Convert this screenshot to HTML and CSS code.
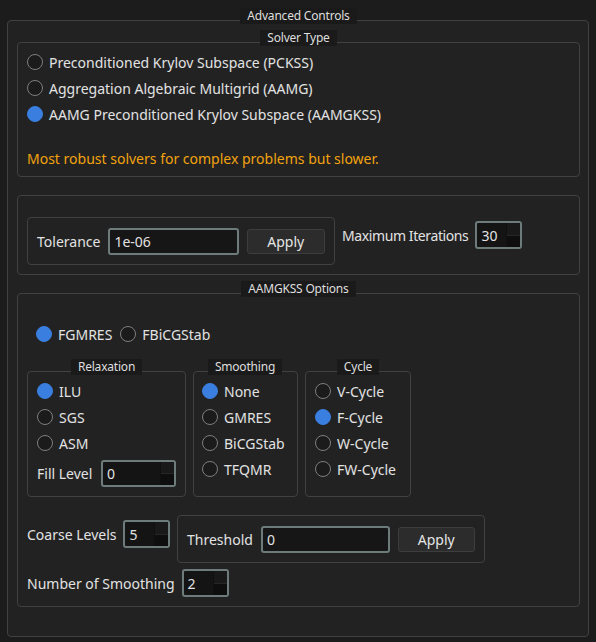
FILE: index.html
```html
<!DOCTYPE html>
<html lang="en">
<head>
    <meta charset="UTF-8">
    <title>Advanced Controls</title>
    <link rel="stylesheet" href="styles.css">
</head>
<body>
    <div class="group outer">
        <div class="group-title">Advanced Controls</div>

        <!-- Solver type selection -->
        <div class="group solver">
            <div class="group-title">Solver Type</div>
            <div class="radio-list">
                <label class="radio"><span class="dot"></span>Preconditioned Krylov Subspace (PCKSS)</label>
                <label class="radio"><span class="dot"></span>Aggregation Algebraic Multigrid (AAMG)</label>
                <label class="radio"><span class="dot on"></span>AAMG Preconditioned Krylov Subspace (AAMGKSS)</label>
            </div>
            <p class="note">Most robust solvers for complex problems but slower.</p>
        </div>

        <!-- Convergence settings -->
        <div class="group params">
            <div class="group inset">
                <span class="label">Tolerance</span>
                <div class="line-edit">1e-06</div>
                <button class="btn">Apply</button>
            </div>
            <div class="field max-iter">
                <span class="label">Maximum Iterations</span>
                <div class="spin"><span class="spin-val">30</span><span class="spin-btns"><i></i><i></i></span></div>
            </div>
        </div>

        <!-- AAMGKSS specific options -->
        <div class="group options">
            <div class="group-title">AAMGKSS Options</div>
            <div class="krylov-row">
                <label class="radio"><span class="dot on"></span>FGMRES</label>
                <label class="radio"><span class="dot"></span>FBiCGStab</label>
            </div>

            <div class="sub-groups">
                <div class="group sub relaxation">
                    <div class="group-title">Relaxation</div>
                    <div class="radio-list">
                        <label class="radio"><span class="dot on"></span>ILU</label>
                        <label class="radio"><span class="dot"></span>SGS</label>
                        <label class="radio"><span class="dot"></span>ASM</label>
                    </div>
                    <div class="field fill-level">
                        <span class="label">Fill Level</span>
                        <div class="spin wide"><span class="spin-val">0</span><span class="spin-btns"><i></i><i></i></span></div>
                    </div>
                </div>
                <div class="group sub smoothing">
                    <div class="group-title">Smoothing</div>
                    <div class="radio-list">
                        <label class="radio"><span class="dot on"></span>None</label>
                        <label class="radio"><span class="dot"></span>GMRES</label>
                        <label class="radio"><span class="dot"></span>BiCGStab</label>
                        <label class="radio"><span class="dot"></span>TFQMR</label>
                    </div>
                </div>
                <div class="group sub cycle">
                    <div class="group-title">Cycle</div>
                    <div class="radio-list">
                        <label class="radio"><span class="dot"></span>V-Cycle</label>
                        <label class="radio"><span class="dot on"></span>F-Cycle</label>
                        <label class="radio"><span class="dot"></span>W-Cycle</label>
                        <label class="radio"><span class="dot"></span>FW-Cycle</label>
                    </div>
                </div>
            </div>

            <div class="levels-row">
                <div class="field coarse">
                    <span class="label">Coarse Levels</span>
                    <div class="spin"><span class="spin-val">5</span><span class="spin-btns"><i></i><i></i></span></div>
                </div>
                <div class="group inset">
                    <span class="label">Threshold</span>
                    <div class="line-edit">0</div>
                    <button class="btn">Apply</button>
                </div>
            </div>
            <div class="field smooth-count">
                <span class="label">Number of Smoothing</span>
                <div class="spin"><span class="spin-val">2</span><span class="spin-btns"><i></i><i></i></span></div>
            </div>
        </div>
    </div>
</body>
</html>
```

FILE: styles.css
```css
/* Page */
body {
    margin: 0;
    padding: 20px 7px 0;
    background: #1c1c1c;
    font-family: "Noto Sans", sans-serif;
    font-size: 14px;
    color: #e2e2e2;
}

/* Group boxes */
.group {
    border: 1px solid #414141;
    border-radius: 4px;
    box-sizing: border-box;
}

.group-title {
    width: fit-content;
    margin: -13px auto 0;
    height: 16px;
    line-height: 16px;
    padding: 0 7px;
    background: #1a1a1a;
    font-size: 12px;
    letter-spacing: -0.2px;
    color: #dedede;
}

.outer {
    background: #222222;
    padding: 0 8px 29px 9px;
    display: flex;
    flex-direction: column;
    gap: 18px;
}

/* Radio buttons */
.radio-list {
    margin-top: 3px;
}

.radio {
    display: flex;
    align-items: center;
    gap: 6px;
    height: 26px;
    white-space: nowrap;
}

.dot {
    width: 16px;
    height: 16px;
    flex: none;
    border-radius: 50%;
    border: 1px solid #7e7e7e;
    background: #1b1b1b;
    box-sizing: border-box;
}

.dot.on {
    background: #3a7fe0;
    border-color: #3a7fe0;
}

/* Solver type */
.solver {
    padding: 0 9px 7px;
}

.note {
    margin: 22px 0 0;
    line-height: 20px;
    color: #f2a30f;
}

/* Tolerance and iterations */
.params {
    display: flex;
    align-items: flex-start;
    gap: 7px;
    padding: 21px 9px 9px;
}

.inset {
    width: 308px;
    height: 48px;
    padding: 0 9px;
    display: flex;
    align-items: center;
    gap: 8px;
}

.label {
    white-space: nowrap;
}

.inset .label,
.fill-level .label,
.coarse .label,
.smooth-count .label {
    flex: 1;
}

.line-edit {
    width: 131px;
    height: 27px;
    box-sizing: border-box;
    border: 2px solid #6d7c7b;
    border-radius: 3px;
    background: #161616;
    padding-left: 4px;
    line-height: 23px;
}

.btn {
    width: 79px;
    height: 25px;
    border: 1px solid #3d3d3d;
    border-radius: 3px;
    background: #2c2c2c;
    color: #e6e6e6;
    font-family: inherit;
    font-size: 14px;
    padding: 0;
}

.field {
    display: flex;
    align-items: center;
    gap: 7px;
}

.max-iter {
    margin-top: 4px;
}

.max-iter .label {
    letter-spacing: -0.4px;
}

/* Spin boxes */
.spin {
    width: 47px;
    height: 28px;
    flex: none;
    display: flex;
    box-sizing: border-box;
    border: 2px solid #6d7c7b;
    border-radius: 3px;
    background: #141414;
}

.spin.wide {
    width: 75px;
    height: 27px;
}

.spin-val {
    flex: 1;
    padding-left: 4px;
    display: flex;
    align-items: center;
}

.spin-btns {
    width: 13px;
    display: flex;
    flex-direction: column;
    border-left: 1px solid #101010;
}

.spin-btns i {
    flex: 1;
    background: #191919;
}

.spin-btns i + i {
    border-top: 1px solid #262626;
    background: #0e0e0e;
}

/* AAMGKSS options */
.options {
    padding: 0 9px 9px;
}

.krylov-row {
    display: flex;
    gap: 8px;
    margin: 24px 0 0 9px;
}

.sub-groups {
    display: flex;
    gap: 7px;
    margin-top: 24px;
}

.sub {
    padding: 0 9px 9px;
}

.relaxation {
    width: 159px;
}

.smoothing {
    width: 105px;
    padding-left: 8px;
}

.cycle {
    width: 106px;
}

.fill-level {
    margin-top: 4px;
}

.levels-row {
    display: flex;
    align-items: flex-start;
    gap: 7px;
    margin-top: 18px;
}

.coarse {
    width: 143px;
    margin-top: 5px;
}

.smooth-count {
    width: 199px;
    margin-top: 6px;
}
```
